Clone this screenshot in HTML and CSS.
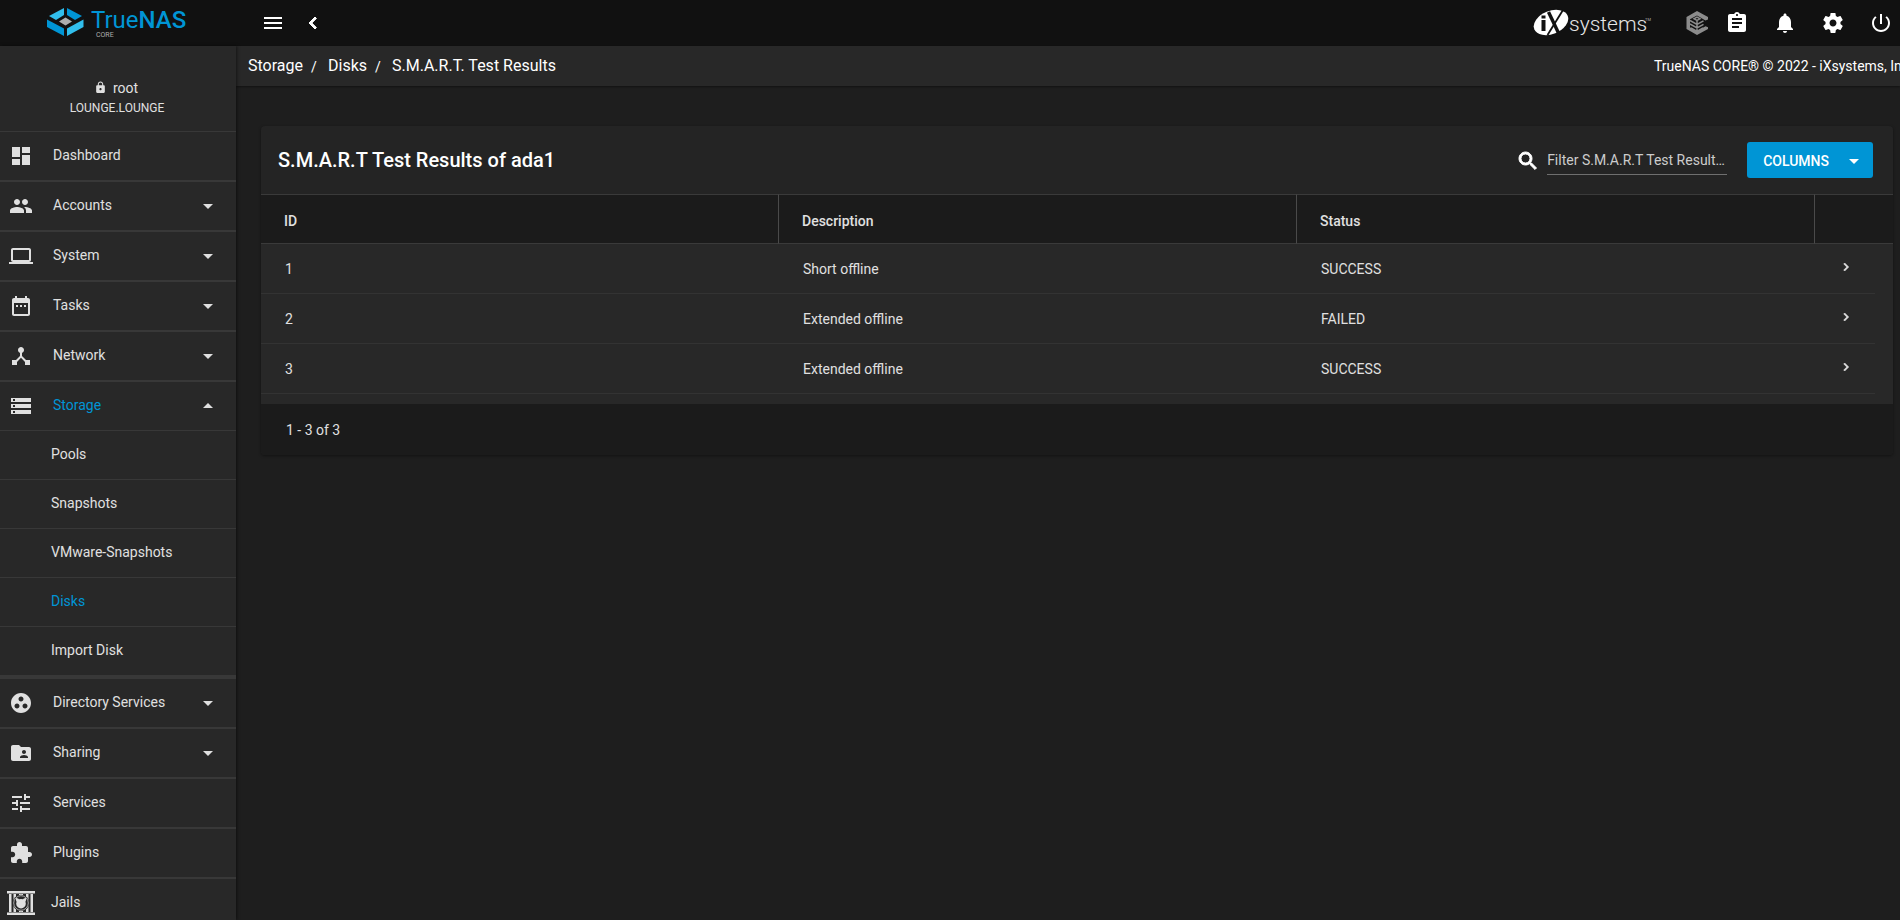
FILE: index.html
```html
<!DOCTYPE html>
<html lang="en">
<head>
<meta charset="utf-8">
<title>TrueNAS - S.M.A.R.T. Test Results</title>
<link rel="stylesheet" href="styles.css">
</head>
<body>
<header class="topbar">
  <a class="brand" href="#" aria-label="TrueNAS CORE">
    <svg width="144" height="34" viewBox="0 0 144 34">
      <path fill="#31beec" d="M2 12 17 4v7l-8 5z"/>
      <path fill="#0095d5" d="M20 4 35 12l-7 4-8-5z"/>
      <path fill="#aeaeae" d="m18.500 13.500 6.500 4-6.500 4-6.500-4z"/>
      <path fill="#0095d5" d="M0 15.500 17 24.500v7.500L0 23z"/>
      <path fill="#31beec" d="M36.500 15.500 20 24.500v7.500l16.500-9z"/>
      <text x="44" y="24" font-size="24" fill="#0095d5"><tspan font-weight="400">True</tspan><tspan font-weight="500">NAS</tspan></text>
      <text x="49" y="33" font-size="7" fill="#aeaeae">CORE</text>
    </svg>
  </a>
  <button class="icon-btn" aria-label="Toggle menu"><svg viewBox="0 0 24 24"><path d="M3 18h18v-2H3v2zm0-5h18v-2H3v2zm0-7v2h18V6H3z"/></svg></button>
  <button class="icon-btn back" aria-label="Collapse menu"><svg viewBox="0 0 24 24"><path d="M15.410 7.410 14 6l-6 6 6 6 1.410-1.410L10.830 12z" stroke="#fff"/></svg></button>
  <div class="top-actions">
    <a class="ix" href="#" aria-label="iXsystems">
      <svg width="120" height="30" viewBox="0 0 120 30">
        <ellipse cx="18" cy="14.500" rx="18" ry="11.500" transform="rotate(-22 18 14.500)" fill="#fff"/>
        <path d="M8.500 12h4v11h-4zM8.500 7.500h4v3h-4z" fill="#111"/>
        <path d="M15.500 4 25.500 25" stroke="#111" stroke-width="3.400" fill="none"/>
        <path d="M30 2 14.500 27" stroke="#111" stroke-width="1.800" fill="none"/>
        <text x="36" y="23" font-size="21" font-weight="300" fill="#e6e6e6">systems</text>
        <text x="112" y="13" font-size="4" fill="#aaa">TM</text>
      </svg>
    </a>
    <button class="icon-btn" aria-label="TrueCommand"><svg viewBox="0 0 24 24"><path fill="#8c8c8c" d="M12 0 23 6v2.500l-2.500 1L12 4.500 5 8.200v8L12 20l8.500-4.800 2.500 1V18l-11 6-10.500-6V6z"/><path fill="#8c8c8c" fill-rule="evenodd" d="m12 5.300 4.500 2.500L12 10.300 7.500 7.800zM12 7l-1.500.800 1.500.800 1.500-.800z"/><path fill="none" stroke="#8c8c8c" stroke-width="1.500" d="M12 10v12M5 9.500l7 4 6.500-3.700M5 13l7 4 6.500-3.700M6 17l6 3.500 6-3.500"/></svg></button>
    <button class="icon-btn" aria-label="Task manager"><svg viewBox="0 0 24 24"><path d="M19 3h-4.180C14.400 1.840 13.300 1 12 1c-1.300 0-2.400.840-2.820 2H5c-1.100 0-2 .900-2 2v14c0 1.100.900 2 2 2h14c1.100 0 2-.900 2-2V5c0-1.100-.900-2-2-2zm-7 0c.550 0 1 .450 1 1s-.450 1-1 1-1-.450-1-1 .450-1 1-1zm2 14H7v-2h7v2zm3-4H7v-2h10v2zm0-4H7V7h10v2z"/></svg></button>
    <button class="icon-btn" aria-label="Notifications"><svg viewBox="0 0 24 24"><path d="M12 22c1.100 0 2-.900 2-2h-4c0 1.100.890 2 2 2zm6-6v-5c0-3.070-1.640-5.640-4.500-6.320V4c0-.830-.670-1.500-1.500-1.500s-1.500.670-1.500 1.500v.680C7.630 5.360 6 7.920 6 11v5l-2 2v1h16v-1l-2-2z"/></svg></button>
    <button class="icon-btn" aria-label="Settings"><svg viewBox="0 0 24 24"><path d="M19.430 12.980c.040-.320.070-.640.070-.980s-.030-.660-.070-.980l2.110-1.650c.190-.150.240-.420.120-.640l-2-3.460c-.120-.220-.390-.300-.610-.220l-2.490 1c-.520-.400-1.080-.730-1.690-.980l-.380-2.650C14.460 2.180 14.250 2 14 2h-4c-.250 0-.460.180-.490.420l-.380 2.650c-.610.250-1.170.590-1.690.980l-2.490-1c-.230-.090-.490 0-.610.220l-2 3.460c-.130.220-.070.490.120.640l2.110 1.650c-.040.320-.070.650-.070.980s.030.660.070.980l-2.110 1.650c-.190.150-.240.420-.120.640l2 3.460c.120.220.390.300.610.220l2.490-1c.520.400 1.080.730 1.690.980l.380 2.650c.030.240.240.420.490.420h4c.250 0 .460-.180.490-.420l.380-2.650c.610-.250 1.170-.590 1.690-.980l2.490 1c.230.090.490 0 .610-.220l2-3.460c.120-.220.070-.490-.120-.640l-2.110-1.650zM12 15.500c-1.930 0-3.500-1.570-3.500-3.500s1.570-3.500 3.500-3.500 3.500 1.570 3.500 3.500-1.570 3.500-3.500 3.500z"/></svg></button>
    <button class="icon-btn" aria-label="Power"><svg viewBox="0 0 24 24"><path d="M13 3h-2v10h2V3zm4.830 2.170-1.420 1.420C17.990 7.860 19 9.810 19 12c0 3.870-3.130 7-7 7s-7-3.130-7-7c0-2.190 1.010-4.140 2.580-5.420L6.170 5.170C4.230 6.820 3 9.260 3 12c0 4.970 4.030 9 9 9s9-4.030 9-9c0-2.740-1.230-5.180-3.170-6.830z"/></svg></button>
  </div>
</header>

<div class="shell">
  <aside class="sidebar">
    <div class="user">
      <div class="user-name"><svg viewBox="0 0 24 24" aria-hidden="true"><path d="M18 8h-1V6c0-2.760-2.240-5-5-5S7 3.240 7 6v2H6c-1.100 0-2 .900-2 2v10c0 1.100.900 2 2 2h12c1.100 0 2-.900 2-2V10c0-1.100-.900-2-2-2zm-6 9c-1.100 0-2-.900-2-2s.900-2 2-2 2 .900 2 2-.900 2-2 2zm3.100-9H8.900V6c0-1.710 1.390-3.100 3.100-3.100 1.710 0 3.100 1.390 3.100 3.100v2z"/></svg>root</div>
      <div class="host">LOUNGE.LOUNGE</div>
    </div>
    <nav>
      <ul class="menu">
        <li><a href="#"><svg viewBox="0 0 24 24"><path d="M3 13h8V3H3v10zm0 8h8v-6H3v6zm10 0h8V11h-8v10zm0-18v6h8V3h-8z"/></svg><span>Dashboard</span></a></li>
        <li><a href="#"><svg viewBox="0 0 24 24"><path d="M16 11c1.660 0 2.990-1.340 2.990-3S17.660 5 16 5c-1.660 0-3 1.340-3 3s1.340 3 3 3zm-8 0c1.660 0 2.990-1.340 2.990-3S9.660 5 8 5C6.340 5 5 6.340 5 8s1.340 3 3 3zm0 2c-2.330 0-7 1.170-7 3.500V19h14v-2.500c0-2.330-4.670-3.500-7-3.500zm8 0c-.290 0-.620.020-.970.050 1.160.840 1.970 1.970 1.970 3.450V19h6v-2.500c0-2.330-4.670-3.500-7-3.500z"/></svg><span>Accounts</span><svg class="caret" viewBox="0 0 24 24"><path d="m7 10 5 5 5-5z"/></svg></a></li>
        <li><a href="#"><svg viewBox="0 0 24 24"><path d="M20 18c1.100 0 1.990-.900 1.990-2L22 6c0-1.100-.900-2-2-2H4c-1.100 0-2 .900-2 2v10c0 1.100.900 2 2 2H0v2h24v-2h-4zM4 6h16v10H4V6z"/></svg><span>System</span><svg class="caret" viewBox="0 0 24 24"><path d="m7 10 5 5 5-5z"/></svg></a></li>
        <li><a href="#"><svg viewBox="0 0 24 24"><path d="M9 11H7v2h2v-2zm4 0h-2v2h2v-2zm4 0h-2v2h2v-2zm2-7h-1V2h-2v2H8V2H6v2H5c-1.110 0-1.990.900-1.990 2L3 20c0 1.100.890 2 2 2h14c1.100 0 2-.900 2-2V6c0-1.100-.900-2-2-2zm0 16H5V9h14v11z"/></svg><span>Tasks</span><svg class="caret" viewBox="0 0 24 24"><path d="m7 10 5 5 5-5z"/></svg></a></li>
        <li><a href="#"><svg viewBox="0 0 24 24"><path d="m17 16-4-4V8.820C14.160 8.400 15 7.300 15 6c0-1.660-1.340-3-3-3S9 4.340 9 6c0 1.300.840 2.400 2 2.820V12l-4 4H3v5h5v-3.050l4-4.200 4 4.200V21h5v-5h-4z"/></svg><span>Network</span><svg class="caret" viewBox="0 0 24 24"><path d="m7 10 5 5 5-5z"/></svg></a></li>
        <li class="open"><a class="active" href="#"><svg viewBox="0 0 24 24"><path d="M2 20h20v-4H2v4zm2-3h2v2H4v-2zM2 4v4h20V4H2zm4 3H4V5h2v2zm-4 7h20v-4H2v4zm2-3h2v2H4v-2z"/></svg><span>Storage</span><svg class="caret" viewBox="0 0 24 24"><path d="m7 14 5-5 5 5z"/></svg></a>
          <ul class="submenu">
            <li><a href="#">Pools</a></li>
            <li><a href="#">Snapshots</a></li>
            <li><a href="#">VMware-Snapshots</a></li>
            <li><a class="active" href="#">Disks</a></li>
            <li><a href="#">Import Disk</a></li>
          </ul>
        </li>
        <li><a href="#"><svg viewBox="0 0 24 24"><path d="M12 2C6.480 2 2 6.480 2 12s4.480 10 10 10 10-4.480 10-10S17.520 2 12 2zM8 17.500c-1.380 0-2.500-1.120-2.500-2.500s1.120-2.500 2.500-2.500 2.500 1.120 2.500 2.500-1.120 2.500-2.500 2.500zM9.500 8c0-1.380 1.120-2.500 2.500-2.500s2.500 1.120 2.500 2.500-1.120 2.500-2.500 2.500S9.500 9.380 9.500 8zm6.500 9.500c-1.380 0-2.500-1.120-2.500-2.500s1.120-2.500 2.500-2.500 2.500 1.120 2.500 2.500-1.120 2.500-2.500 2.500z"/></svg><span>Directory Services</span><svg class="caret" viewBox="0 0 24 24"><path d="m7 10 5 5 5-5z"/></svg></a></li>
        <li><a href="#"><svg viewBox="0 0 24 24"><path d="M20 6h-8l-2-2H4c-1.100 0-1.990.900-1.990 2L2 18c0 1.100.900 2 2 2h16c1.100 0 2-.900 2-2V8c0-1.100-.900-2-2-2zm-5 3c1.100 0 2 .900 2 2s-.900 2-2 2-2-.900-2-2 .900-2 2-2zm4 8h-8v-1c0-1.330 2.670-2 4-2s4 .670 4 2v1z"/></svg><span>Sharing</span><svg class="caret" viewBox="0 0 24 24"><path d="m7 10 5 5 5-5z"/></svg></a></li>
        <li><a href="#"><svg viewBox="0 0 24 24"><path d="M3 17v2h6v-2H3zM3 5v2h10V5H3zm10 16v-2h8v-2h-8v-2h-2v6h2zM7 9v2H3v2h4v2h2V9H7zm14 4v-2H11v2h10zm-6-4h2V7h4V5h-4V3h-2v6z"/></svg><span>Services</span></a></li>
        <li><a href="#"><svg viewBox="0 0 24 24"><path d="M20.500 11H19V7c0-1.100-.900-2-2-2h-4V3.500C13 2.120 11.880 1 10.500 1S8 2.120 8 3.500V5H4c-1.100 0-1.990.900-1.990 2v3.800H3.500c1.490 0 2.700 1.210 2.700 2.700s-1.210 2.700-2.700 2.700H2V20c0 1.100.900 2 2 2h3.800v-1.500c0-1.490 1.210-2.700 2.700-2.700 1.490 0 2.700 1.210 2.700 2.700V22H17c1.100 0 2-.900 2-2v-4h1.500c1.380 0 2.500-1.120 2.500-2.500S21.880 11 20.500 11z"/></svg><span>Plugins</span></a></li>
        <li><a class="jails" href="#"><svg viewBox="0 0 28 24"><path d="M0 0h28v2.500H0zM0 21.500h28V24H0zM2 3h2.500v18H2zM6.500 3H9v18H6.500zM12 3h4v18h-4zM19 3h2.500v18H19zM23.500 3H26v18h-2.500z"/><circle cx="14" cy="12" r="8.300" fill="#282828"/><circle cx="14" cy="12" r="7.300" fill="none" stroke="#a8a8a8" stroke-width="1"/><circle cx="14" cy="12.700" r="4.800"/><path d="M9 7c1.800 0 3 .800 3.300 2L10 11C9 10 8.700 8.500 9 7zM19 7c-1.800 0-3 .800-3.300 2l2.300 2c1-1 1.300-2.500 1-4z"/></svg><span>Jails</span></a></li>
      </ul>
    </nav>
  </aside>

  <main class="main">
    <div class="crumbbar">
      <nav class="crumbs" aria-label="Breadcrumb"><a href="#">Storage</a><span>/</span><a href="#">Disks</a><span>/</span><a href="#">S.M.A.R.T. Test Results</a></nav>
      <div class="copyright">TrueNAS CORE® © 2022 - iXsystems, Inc.</div>
    </div>
    <section class="card">
      <div class="card-head">
        <h1>S.M.A.R.T Test Results of ada1</h1>
        <label class="search">
          <svg viewBox="0 0 24 24" aria-hidden="true"><path d="M15.500 14h-.790l-.280-.270C15.410 12.590 16 11.110 16 9.500 16 5.910 13.090 3 9.500 3S3 5.910 3 9.500 5.910 16 9.500 16c1.610 0 3.090-.590 4.230-1.570l.270.280v.790l5 4.990L20.490 19l-4.990-5zm-6 0C7.010 14 5 11.990 5 9.500S7.010 5 9.500 5 14 7.010 14 9.500 11.990 14 9.500 14z"/></svg>
          <input type="text" placeholder="Filter S.M.A.R.T Test Results of ada1" aria-label="Filter S.M.A.R.T Test Results of ada1">
        </label>
        <button class="columns">COLUMNS<svg viewBox="0 0 24 24" aria-hidden="true"><path d="m7 10 5 5 5-5z"/></svg></button>
      </div>
      <table class="results">
        <thead><tr><th>ID</th><th>Description</th><th>Status</th><th class="expand" aria-label="Expand"></th></tr></thead>
        <tbody>
          <tr><td>1</td><td>Short offline</td><td>SUCCESS</td><td class="expand"><div><button aria-label="Expand row 1"><svg viewBox="0 0 24 24"><path d="M10 6 8.590 7.410 13.170 12l-4.580 4.590L10 18l6-6z"/></svg></button></div></td></tr>
          <tr><td>2</td><td>Extended offline</td><td>FAILED</td><td class="expand"><div><button aria-label="Expand row 2"><svg viewBox="0 0 24 24"><path d="M10 6 8.590 7.410 13.170 12l-4.580 4.590L10 18l6-6z"/></svg></button></div></td></tr>
          <tr><td>3</td><td>Extended offline</td><td>SUCCESS</td><td class="expand"><div><button aria-label="Expand row 3"><svg viewBox="0 0 24 24"><path d="M10 6 8.590 7.410 13.170 12l-4.580 4.590L10 18l6-6z"/></svg></button></div></td></tr>
        </tbody>
      </table>
      <div class="card-foot">1 - 3 of 3</div>
    </section>
  </main>
</div>
</body>
</html>
```

FILE: styles.css
```css
* { box-sizing: border-box; }
body {
  margin: 0;
  height: 100vh;
  overflow: hidden;
  display: flex;
  flex-direction: column;
  background: #1e1e1e;
  color: #e0e0e0;
  font: 14px/20px Roboto, "Liberation Sans", sans-serif;
}
a { color: inherit; text-decoration: none; }
ul { list-style: none; margin: 0; padding: 0; }
button { border: 0; padding: 0; background: none; color: inherit; font: inherit; cursor: pointer; }
svg { display: block; flex: none; fill: currentColor; }

.topbar {
  flex: none;
  height: 46px;
  display: flex;
  align-items: center;
  background: #111;
  color: #fff;
  padding-right: 7px;
}
.brand { width: 261px; padding: 4px 0 8px 47px; }
.icon-btn svg { width: 24px; height: 24px; }
.back { margin-left: 16px; }
.top-actions { margin-left: auto; display: flex; align-items: center; gap: 24px; }
.top-actions .icon-btn:nth-child(2) { margin: 0 -8px 0 8px; }

.shell { flex: 1; min-height: 0; display: flex; }
.sidebar {
  flex: none;
  width: 236px;
  overflow: hidden;
  background: #282828;
  box-shadow: 1px 0 3px rgba(0, 0, 0, .5);
  z-index: 1;
}
.user {
  height: 85px;
  padding-top: 32px;
  display: flex;
  flex-direction: column;
  align-items: center;
}
.user-name { display: flex; align-items: center; gap: 6px; padding-right: 4px; font-size: 14px; line-height: 20px; }
.user-name svg { width: 13px; height: 13px; margin-bottom: 2px; }
.host { font-size: 12px; line-height: 20px; padding-right: 2px; }

.menu > li { border: solid #383838; border-width: 1px 0; }
.menu > li > a {
  height: 48px;
  display: flex;
  align-items: center;
  padding: 0 16px 0 9px;
}
.menu > li > a > span { flex: 1; margin: 0 0 2px 20px; }
.menu svg { width: 24px; height: 24px; }
.menu > li > .active > span, .submenu .active { color: #0095d5; }
.menu > li > .jails { padding-left: 7px; }
.menu > li > .jails svg { width: 28px; }
.menu > li > .jails span { margin-left: 16px; }
.submenu { border: solid #383838; border-width: 1px 0; }
.submenu li { border-bottom: 1px solid #383838; }
.submenu a { display: block; height: 48px; padding: 0 0 0 51px; line-height: 46px; }

.main { flex: 1; min-width: 0; }
.crumbbar {
  height: 40px;
  display: flex;
  align-items: center;
  justify-content: space-between;
  padding-left: 12px;
  overflow: hidden;
  background: #282828;
  color: #fff;
  box-shadow: 0 1px 2px rgba(0, 0, 0, .4);
}
.crumbs { display: flex; padding-top: 2px; font-size: 16px; }
.crumbs span { width: 25px; padding-left: 8px; font-size: 14px; line-height: 22px; }
.copyright { width: 246px; white-space: nowrap; }

.card {
  margin: 40px 7px 0 25px;
  border-radius: 4px;
  overflow: hidden;
  background: #242424;
  box-shadow: 0 1px 3px rgba(0, 0, 0, .4);
}
.card-head {
  height: 68px;
  display: flex;
  align-items: center;
  padding: 0 20px 0 17px;
}
.card-head h1 { flex: 1; margin: 0; font-size: 20px; line-height: 24px; font-weight: 500; color: #fff; }
.search { display: flex; align-items: center; gap: 7px; margin-right: 20px; color: #fff; }
.search svg { width: 24px; height: 24px; margin-top: 2px; }
.search path { stroke: currentColor; stroke-width: 1; }
.search input {
  width: 180px;
  height: 30px;
  padding: 0;
  border: 0;
  border-bottom: 1px solid #6f6f6f;
  background: none;
  color: #e0e0e0;
  font: inherit;
  text-overflow: ellipsis;
}
.search input::placeholder { color: #ccc; opacity: 1; }
.columns {
  height: 36px;
  display: flex;
  align-items: center;
  padding: 1px 7px 0 16px;
  gap: 13px;
  border-radius: 3px;
  background: #0095d5;
  color: #fff;
  font-weight: 500;
}
.columns svg { width: 24px; height: 24px; }

.results { width: 100%; table-layout: fixed; border-collapse: separate; border-spacing: 0; }
.results th {
  height: 50px;
  padding: 4px 0 0 23px;
  text-align: left;
  font-weight: 500;
  background: #1b1b1b;
  border: solid #3a3a3a;
  border-width: 1px 0;
}
.results th:not(:last-child) { border-right: 1px solid #4a4a4a; }
.results td {
  height: 50px;
  padding: 0 0 0 24px;
  background: #282828;
  border-bottom: 1px solid #333;
}
.results .expand { width: 78px; }
.results td.expand { padding: 0 18px 0 0; border: 0; }
.expand div { height: 50px; display: flex; align-items: center; padding: 0 0 4px 23px; border-bottom: 1px solid #333; }
.expand svg { width: 16px; height: 16px; }
.expand path { stroke: currentColor; stroke-width: 1; }
.card-foot {
  height: 61px;
  padding-left: 25px;
  line-height: 52px;
  background: #1b1b1b;
  border-top: 10px solid #282828;
}
```
